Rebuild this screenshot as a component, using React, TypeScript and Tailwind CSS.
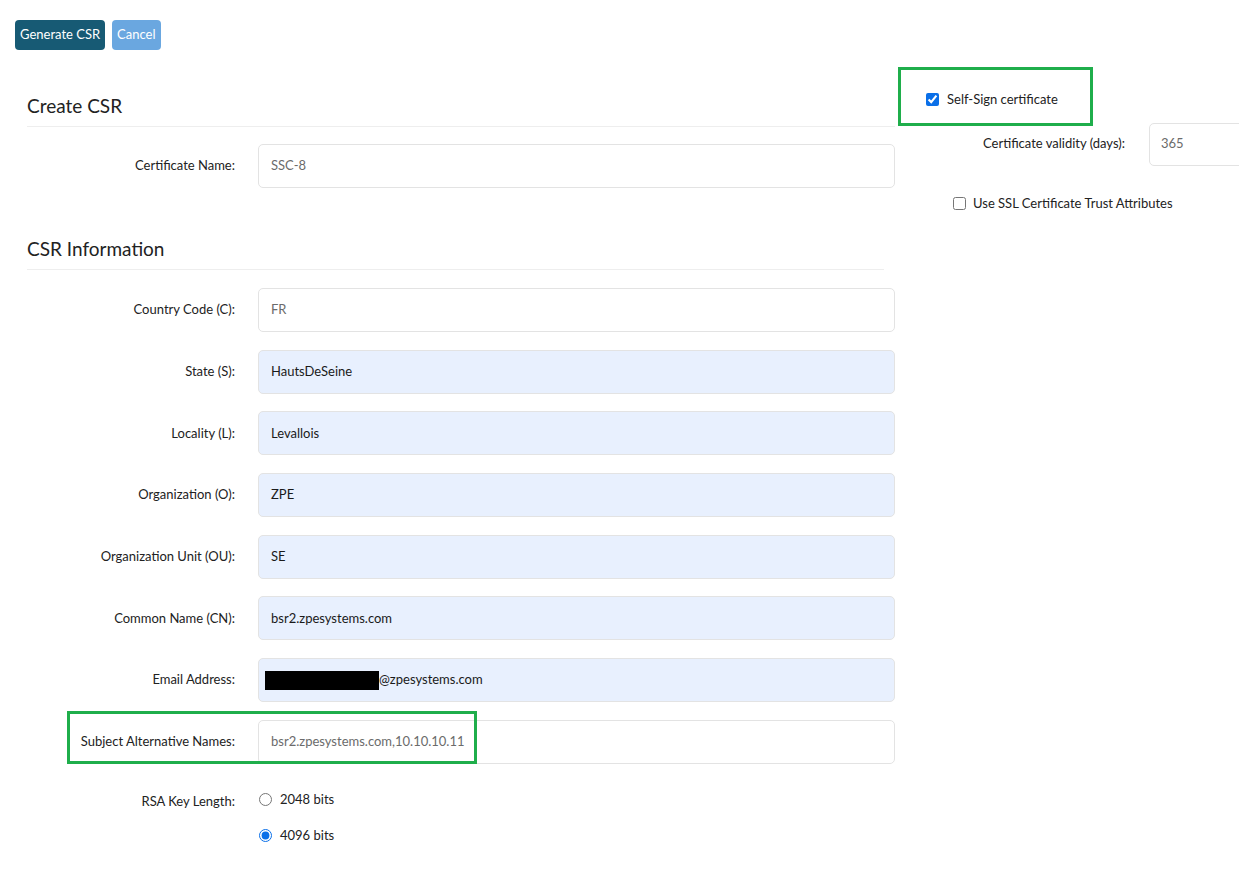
import React from 'react';

const font = { fontFamily: 'Lato, "Liberation Sans", sans-serif' };

type Row = { label: string; value: string; filled?: boolean; redacted?: boolean };

const rows: Row[] = [
  { label: 'Country Code (C):', value: 'FR' },
  { label: 'State (S):', value: 'HautsDeSeine', filled: true },
  { label: 'Locality (L):', value: 'Levallois', filled: true },
  { label: 'Organization (O):', value: 'ZPE', filled: true },
  { label: 'Organization Unit (OU):', value: 'SE', filled: true },
  { label: 'Common Name (CN):', value: 'bsr2.zpesystems.com', filled: true },
  { label: 'Email Address:', value: '@zpesystems.com', filled: true, redacted: true },
  { label: 'Subject Alternative Names:', value: 'bsr2.zpesystems.com,10.10.10.11' },
];

function Field({ row }: { row: Row }) {
  return (
    <div className="flex items-center">
      <label className="w-[208px] shrink-0 text-right text-[13px] text-[#222]">{row.label}</label>
      <div
        className={`ml-[23px] flex h-[44px] w-[637px] items-center rounded-[5px] border border-[#e3e3e3] px-[12px] text-[13px] ${
          row.filled ? 'bg-[#e8f0fe] text-[#1a1a1a]' : 'bg-white text-[#6b6b6b]'
        }`}
      >
        {row.redacted && <span className="-ml-[6px] inline-block h-[19px] w-[114px] bg-black" />}
        {row.value}
      </div>
    </div>
  );
}

export default function App() {
  return (
    <div className="flex min-h-screen w-[1239px] overflow-hidden bg-white" style={font}>
      {/* Left column */}
      <div className="relative w-[898px] shrink-0">
        <div className="flex gap-[7px] pl-[15px] pt-[20px]">
          <button className="h-[30px] rounded-[4px] bg-[#175a74] px-[5px] text-[13px] text-white">
            Generate CSR
          </button>
          <button className="h-[30px] rounded-[4px] bg-[#6aa7e0] px-[5px] text-[13px] text-white">
            Cancel
          </button>
        </div>

        <div className="pl-[27px]">
          {/* Create CSR */}
          <h2 className="mt-[42px] text-[19px] leading-[28px] text-[#222]">Create CSR</h2>
          <div className="mt-[6px] h-px w-[868px] bg-[#eeeeee]" />
          <div className="mt-[17px]">
            <Field row={{ label: 'Certificate Name:', value: 'SSC-8' }} />
          </div>

          {/* CSR Information */}
          <h2 className="mt-[47px] text-[19px] leading-[28px] text-[#222]">CSR Information</h2>
          <div className="mt-[6px] h-px w-[857px] bg-[#eeeeee]" />
          <div className="mt-[18px] flex flex-col gap-[17.7px]">
            {rows.map((r) => (
              <Field key={r.label} row={r} />
            ))}
          </div>

          {/* RSA Key Length */}
          <div className="mt-[26px] flex">
            <span className="w-[208px] shrink-0 pt-[2px] text-right text-[13px] text-[#222]">RSA Key Length:</span>
            <div className="ml-[23px] flex flex-col gap-[17px]">
              <label className="flex h-[19px] items-center gap-[8px] text-[13px] text-[#222]">
                <input type="radio" name="rsa" className="ml-[1px] h-[13px] w-[13px]" />
                2048 bits
              </label>
              <label className="flex h-[19px] items-center gap-[8px] text-[13px] text-[#222]">
                <input type="radio" name="rsa" defaultChecked className="ml-[1px] h-[13px] w-[13px] accent-[#0a6fe8]" />
                4096 bits
              </label>
            </div>
          </div>
        </div>

        {/* annotation box */}
        <div className="pointer-events-none absolute left-[67px] top-[711px] h-[53px] w-[410px] border-[3px] border-[#1fae4b]" />
      </div>

      {/* Right column */}
      <div className="relative flex-1">
        <label className="flex items-center gap-[8px] pl-[28px] pt-[90px] text-[13px] text-[#222]">
          <input type="checkbox" defaultChecked className="h-[13px] w-[13px] accent-[#0a6fe8]" />
          Self-Sign certificate
        </label>
        <div className="mt-[13px] flex items-center">
          <span className="w-[227px] shrink-0 text-right text-[13px] text-[#222]">Certificate validity (days):</span>
          <div className="ml-[24px] flex h-[43px] w-[120px] shrink-0 items-center rounded-[5px] border border-[#e3e3e3] px-[11px] text-[13px] text-[#6b6b6b]">
            365
          </div>
        </div>
        <label className="mt-[28px] flex items-center gap-[7px] pl-[55px] text-[13px] text-[#222]">
          <input type="checkbox" className="h-[13px] w-[13px]" />
          Use SSL Certificate Trust Attributes
        </label>

        {/* annotation box */}
        <div className="pointer-events-none absolute left-0 top-[67px] h-[59px] w-[195px] border-[3px] border-[#1fae4b]" />
      </div>
    </div>
  );
}
